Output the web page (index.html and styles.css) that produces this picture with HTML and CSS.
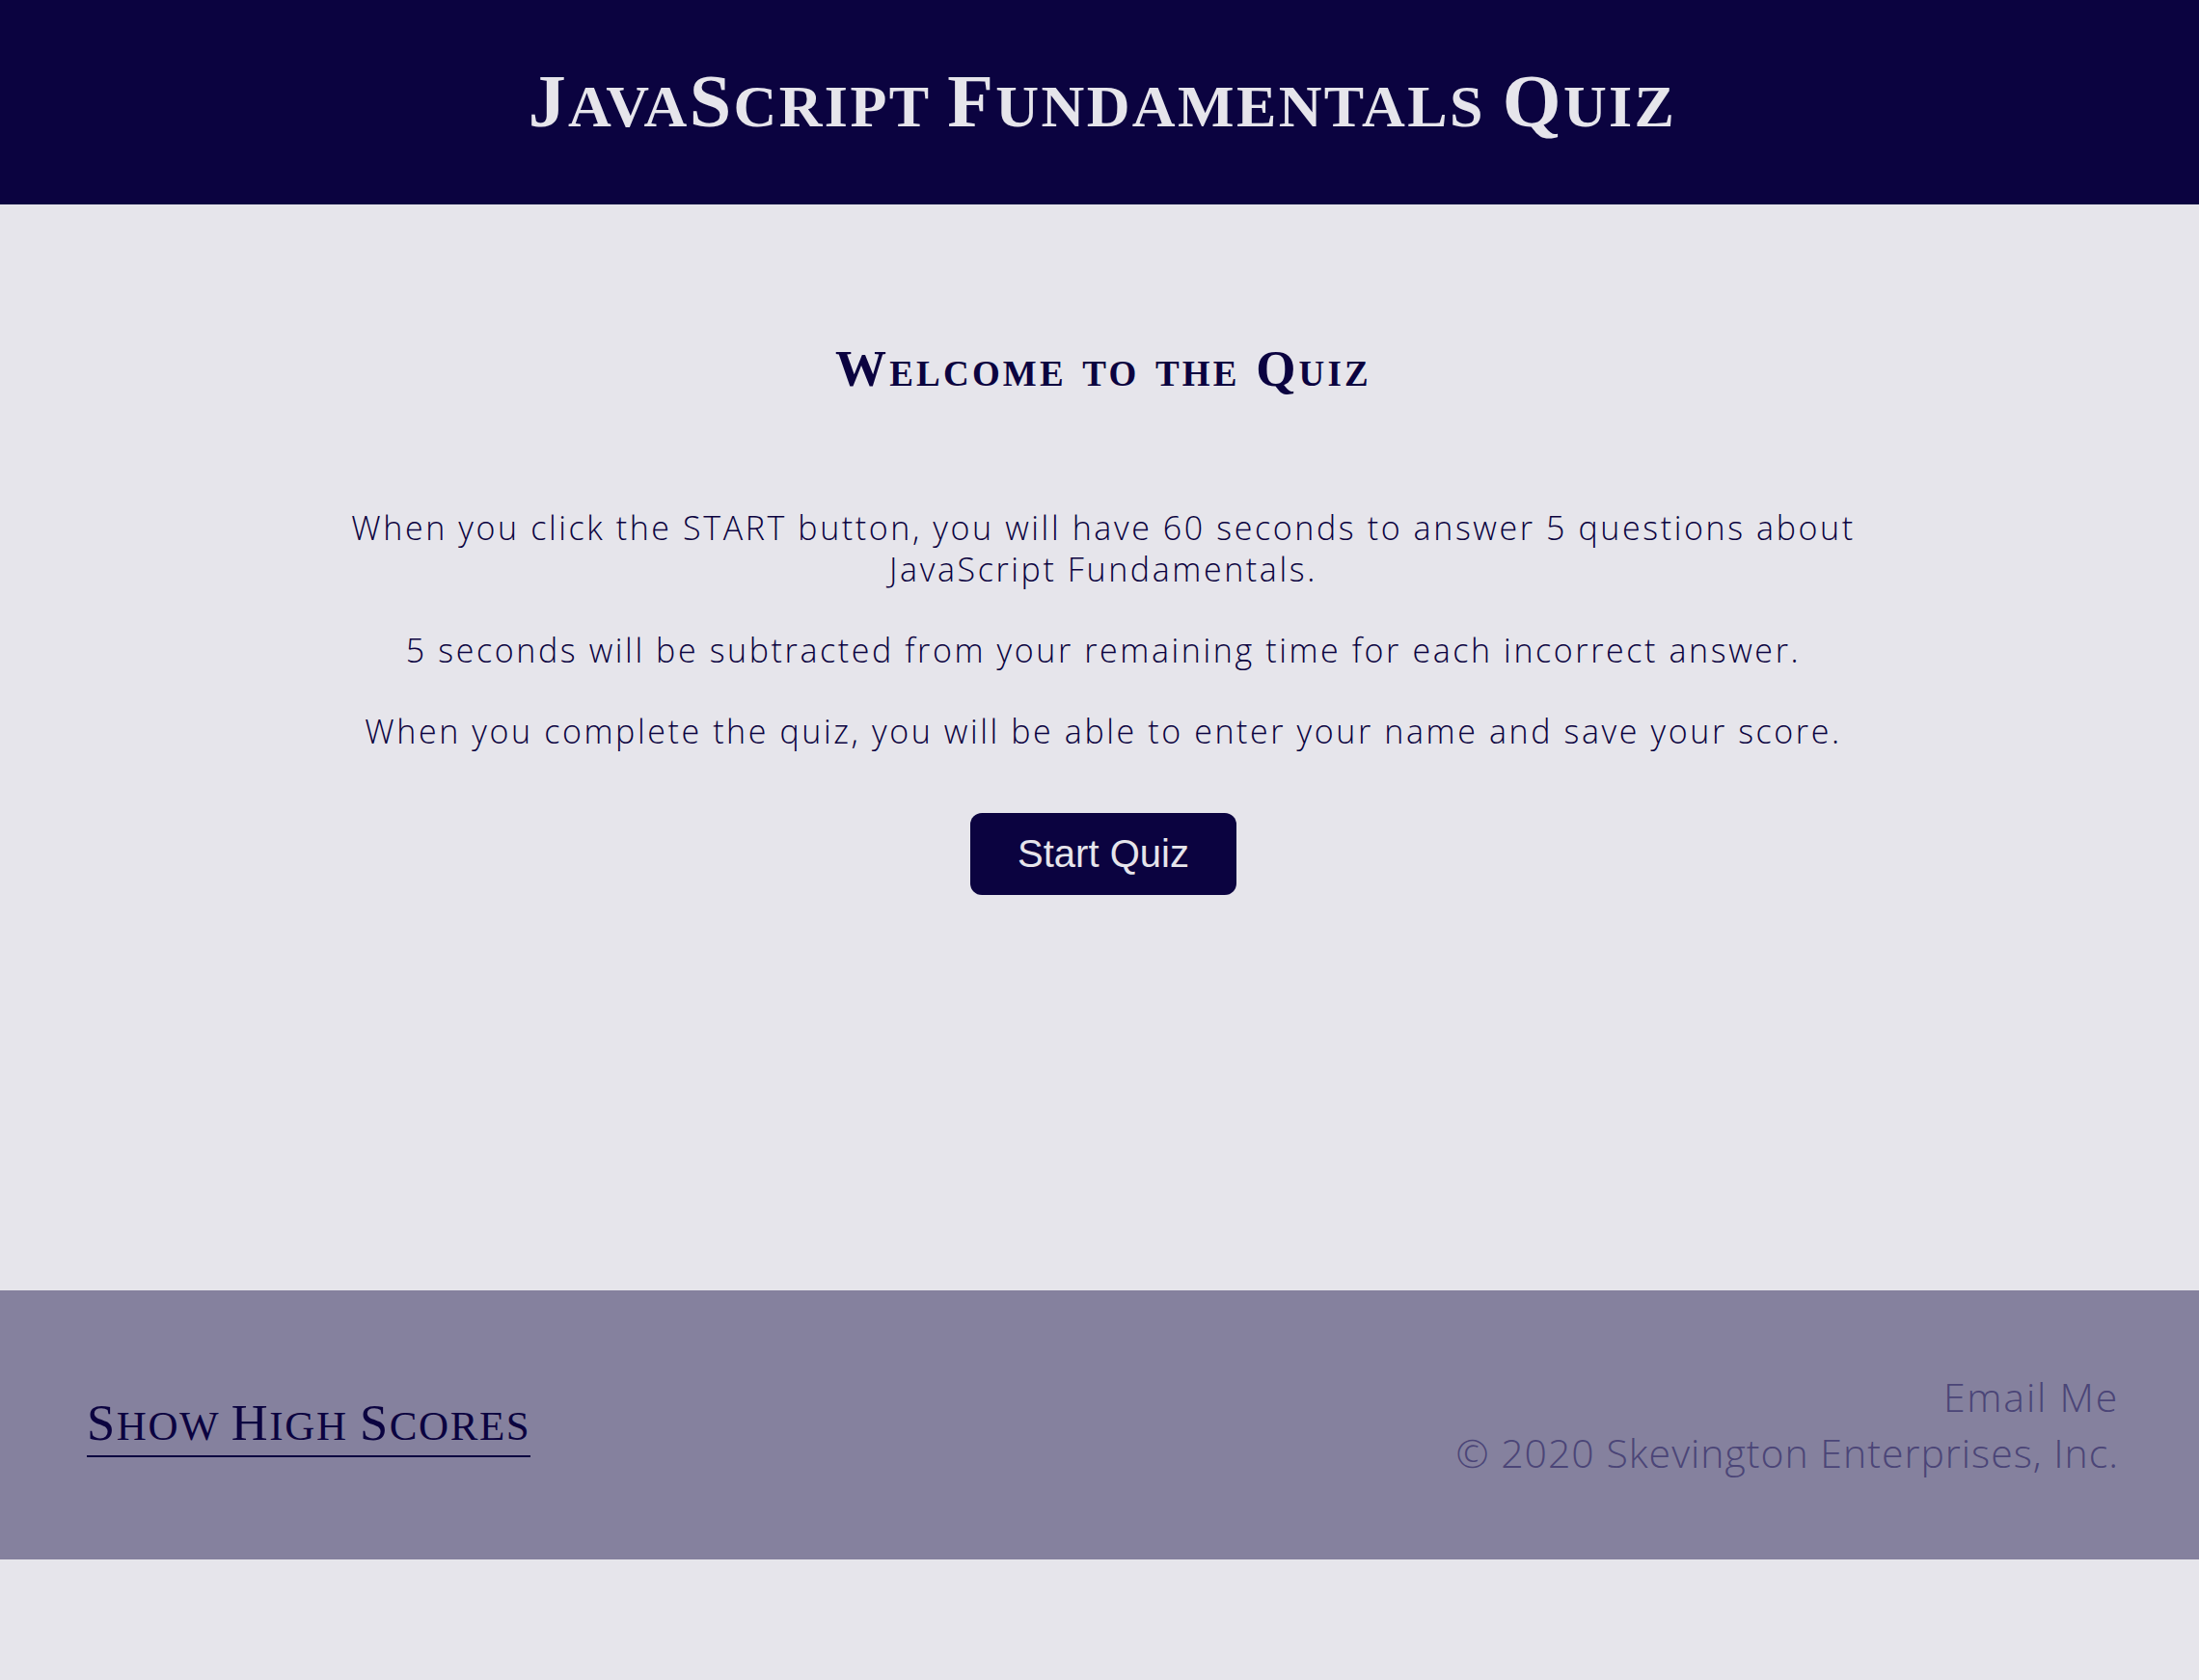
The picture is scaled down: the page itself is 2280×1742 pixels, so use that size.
FILE: index.html
```html
<!DOCTYPE html>
<html lang="en">
<head>
<meta charset="utf-8">
<title>JavaScript Fundamentals Quiz</title>
<link rel="stylesheet" href="styles.css">
</head>
<body>
<header class="site-header">
  <h1 class="title"><span class="cap">J</span>ava<span class="cap">S</span>cript <span class="cap">F</span>undamentals <span class="cap">Q</span>uiz</h1>
</header>
<main class="main">
  <h2 class="welcome">Welcome to the Quiz</h2>
  <div class="intro">
    <p>When you click the START button, you will have 60 seconds to answer 5 questions about JavaScript Fundamentals.</p>
    <p>5 seconds will be subtracted from your remaining time for each incorrect answer.</p>
    <p>When you complete the quiz, you will be able to enter your name and save your score.</p>
  </div>
  <button class="start-btn" type="button">Start Quiz</button>
</main>
<footer class="site-footer">
  <a class="scores-link" href="#"><span class="cap">S</span>how <span class="cap">H</span>igh <span class="cap">S</span>cores</a>
  <div class="footer-info">
    <a class="email" href="#">Email Me</a>
    <div class="copy">© 2020 Skevington Enterprises, Inc.</div>
  </div>
</footer>
</body>
</html>
```
FILE: styles.css
```css
html, body {
  margin: 0;
  padding: 0;
}
body {
  background: #e6e5eb;
  color: #0b0340;
  font-family: "Open Sans", "Liberation Sans", sans-serif;
  min-height: 1742px;
}
.site-header {
  background: #0b0340;
  height: 212px;
  display: flex;
  align-items: center;
  justify-content: center;
  padding-left: 6px;
}
.title {
  margin: 0;
  font-family: "Liberation Serif", serif;
  font-weight: 700;
  font-size: 62px;
  text-transform: uppercase;
  color: #e6e5eb;
  letter-spacing: 2.4px;
  line-height: 1;
  padding-bottom: 1px;
}
.title .cap {
  font-size: 1.26em;
}
.main {
  height: 1126px;
  box-sizing: border-box;
  padding-top: 138px;
  padding-left: 8px;
  display: flex;
  flex-direction: column;
  align-items: center;
}
.welcome {
  margin: 0;
  font-family: "Liberation Serif", serif;
  font-weight: 700;
  font-size: 53px;
  font-variant: small-caps;
  line-height: 64px;
  letter-spacing: 3.2px;
}
.intro {
  margin-top: 112px;
  width: 1600px;
  text-align: center;
  font-weight: 300;
  font-size: 34px;
  line-height: 43px;
  letter-spacing: 2.6px;
}
.intro p {
  margin: 0 0 41px;
}
.start-btn {
  margin-top: 22px;
  width: 276px;
  height: 85px;
  border: 0;
  border-radius: 12px;
  background: #0b0340;
  color: #e6e5eb;
  font-family: "Liberation Sans", Arial, sans-serif;
  font-size: 40px;
  padding: 0;
}
.site-footer {
  background: #85819e;
  height: 279px;
  display: flex;
  align-items: center;
  justify-content: space-between;
  padding: 0 83px 0 90px;
}
.scores-link {
  font-family: "Liberation Serif", serif;
  font-size: 43px;
  text-transform: uppercase;
  color: #0b0340;
  text-decoration: none;
  border-bottom: 2px solid #0b0340;
  line-height: 1.2;
  padding-bottom: 2px;
  margin-top: 0;
  letter-spacing: 1.6px;
}
.scores-link .cap {
  font-size: 1.22em;
}
.footer-info {
  text-align: right;
  font-weight: 300;
  font-size: 41px;
  line-height: 58px;
  color: #4b4577;
  letter-spacing: 1px;
  margin-bottom: 2px;
}
.email {
  color: #4b4577;
  text-decoration: none;
  display: block;
  letter-spacing: 1.8px;
}
.copy {
  display: block;
}
```
